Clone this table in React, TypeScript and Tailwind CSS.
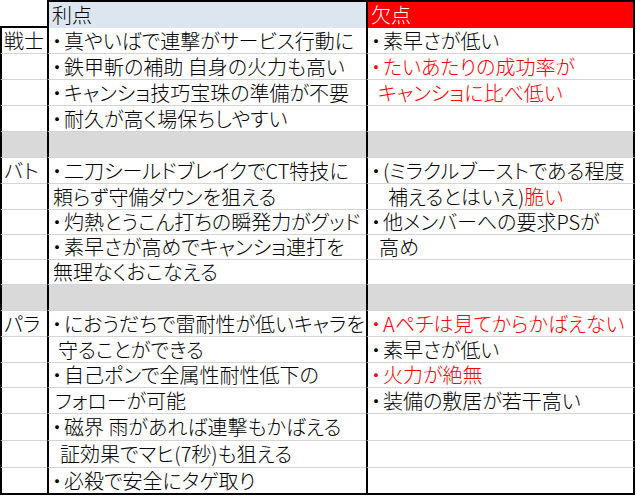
import React from 'react';

interface CellText {
  text: string;
  red?: boolean;
  indent?: number;
  tail?: string;
}

interface SheetRow {
  h: string;
  a?: string;
  b?: CellText;
  c?: CellText;
  gray?: boolean;
}

const rows: SheetRow[] = [
  { h: 'h-[26px]', a: '戦士', b: { text: '・真やいばで連撃がサービス行動に' }, c: { text: '・素早さが低い' } },
  { h: 'h-[26px]', b: { text: '・鉄甲斬の補助 自身の火力も高い' }, c: { text: '・たいあたりの成功率が', red: true } },
  { h: 'h-[26px]', b: { text: '・キャンショ技巧宝珠の準備が不要' }, c: { text: 'キャンショに比べ低い', red: true, indent: 9 } },
  { h: 'h-[26px]', b: { text: '・耐久が高く場保ちしやすい' } },
  { h: 'h-[26px]', gray: true },
  { h: 'h-[26px]', a: 'バト', b: { text: '・二刀シールドブレイクでCT特技に' }, c: { text: '・(ミラクルブーストである程度' } },
  { h: 'h-[26px]', b: { text: '頼らず守備ダウンを狙える', indent: 3 }, c: { text: '補えるとはいえ)', indent: 19, tail: '脆い' } },
  { h: 'h-[25px]', b: { text: '・灼熱とうこん打ちの瞬発力がグッド' }, c: { text: '・他メンバーへの要求PSが' } },
  { h: 'h-[25px]', b: { text: '・素早さが高めでキャンショ連打を' }, c: { text: '高め', indent: 10 } },
  { h: 'h-[25px]', b: { text: '無理なくおこなえる', indent: 3 } },
  { h: 'h-[26px]', gray: true },
  { h: 'h-[26px]', a: 'パラ', b: { text: '・におうだちで雷耐性が低いキャラを' }, c: { text: '・Aペチは見てからかばえない', red: true } },
  { h: 'h-[26px]', b: { text: '守ることができる', indent: 8 }, c: { text: '・素早さが低い' } },
  { h: 'h-[25px]', b: { text: '・自己ポンで全属性耐性低下の' }, c: { text: '・火力が絶無', red: true } },
  { h: 'h-[26px]', b: { text: 'フォローが可能', indent: 5 }, c: { text: '・装備の敷居が若干高い' } },
  { h: 'h-[27px]', b: { text: '・磁界 雨があれば連撃もかばえる' } },
  { h: 'h-[27px]', b: { text: '証効果でマヒ(7秒)も狙える', indent: 10 } },
  { h: 'h-[27px]', b: { text: '・必殺で安全にタゲ取り' } },
];

function Text({ cell }: { cell?: CellText }) {
  if (!cell) return null;
  const bullet = cell.text.startsWith('・');
  const body = bullet ? cell.text.slice(1) : cell.text;
  return (
    <span
      className={cell.red ? 'text-[#ff0000]' : 'text-black'}
      style={{ paddingLeft: (cell.indent ?? 0) + 1 }}
    >
      {bullet && (
        <span className="-ml-[3px] mr-[-3px]" style={{ fontFeatureSettings: 'normal' }}>
          ・
        </span>
      )}
      {body}
      {cell.tail && <span className="text-[#ff0000]">{cell.tail}</span>}
    </span>
  );
}

export default function App() {
  return (
    <div
      className="w-[636px] h-[496px] overflow-hidden bg-white text-[20px] font-light leading-[22px]"
      style={{ fontFamily: '"Noto Sans CJK JP", "Noto Sans", sans-serif', fontFeatureSettings: '"palt"' }}
    >
      {/* header */}
      <div className="flex h-[28px]">
        <div className="w-[47px] shrink-0 border-b-2 border-black" />
        <div className="flex w-[319px] shrink-0 items-center overflow-hidden whitespace-nowrap border-l-2 border-t-2 border-black bg-[#dce6f1] pl-[3px]">
          利点
        </div>
        <div className="flex w-[269px] shrink-0 items-center overflow-hidden whitespace-nowrap border-x-2 border-t-2 border-black bg-[#ff0000] pl-[3px] text-white">
          欠点
        </div>
      </div>

      {rows.map((row, i) => {
        const last = i === rows.length - 1;
        const bottom = last ? 'border-b-2 border-b-black' : 'border-b border-b-[#d4d4d4]';
        const fill = row.gray ? 'bg-[#d9d9d9]' : 'bg-white';
        return (
          <div key={i} className={`flex ${row.h}`}>
            <div className={`flex w-[47px] shrink-0 items-center overflow-hidden whitespace-nowrap border-l-2 border-l-black pl-[2px] ${bottom} ${fill}`}>
              {row.a}
            </div>
            <div className={`flex w-[319px] shrink-0 items-center overflow-hidden whitespace-nowrap border-l-2 border-l-black ${bottom} ${fill}`}>
              <Text cell={row.b} />
            </div>
            <div className={`flex w-[269px] shrink-0 items-center overflow-hidden whitespace-nowrap border-x-2 border-x-black ${bottom} ${fill}`}>
              <Text cell={row.c} />
            </div>
          </div>
        );
      })}
    </div>
  );
}
